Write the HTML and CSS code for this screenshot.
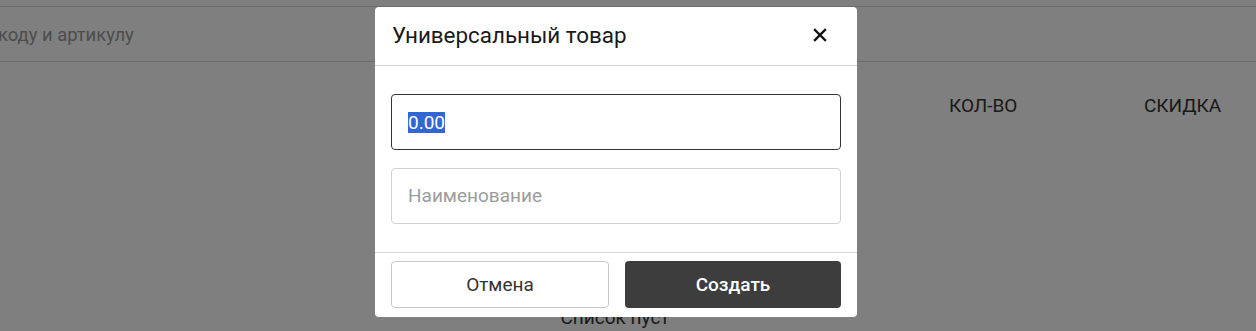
FILE: index.html
```html
<!DOCTYPE html>
<html lang="ru">
<head>
<meta charset="utf-8">
<link rel="stylesheet" href="styles.css">
</head>
<body>
<div class="page">
  <div class="topbar"></div>
  <div class="search"><span class="search-text">коду и артикулу</span></div>
  <div class="table-head">
    <span class="col col-qty">КОЛ-ВО</span>
    <span class="col col-disc">СКИДКА</span>
  </div>
  <div class="empty-wrap"><span class="empty">Список пуст</span></div>
</div>
<div class="overlay">
  <div class="modal">
    <div class="modal-header">
      <span class="modal-title">Универсальный товар</span>
      <svg class="close" width="14" height="14" viewBox="0 0 14 14"><path d="M2 2L12 12M12 2L2 12" stroke="#111" stroke-width="2.4" stroke-linecap="square"/></svg>
    </div>
    <div class="modal-body">
      <div class="field field-active"><span class="sel">0.00</span></div>
      <div class="field"><span class="placeholder">Наименование</span></div>
    </div>
    <div class="modal-footer">
      <div class="btn btn-cancel">Отмена</div>
      <div class="btn btn-create">Создать</div>
    </div>
  </div>
</div>
</body>
</html>
```

FILE: styles.css
```css
* { box-sizing: border-box; }
html, body { margin: 0; padding: 0; }
body {
  width: 1256px;
  height: 331px;
  overflow: hidden;
  background: #fff;
  font-family: Roboto, "Noto Sans", sans-serif;
  position: relative;
}
.page { width: 1256px; }
.topbar {
  height: 7px;
  border-bottom: 1px solid #d8d8d8;
}
.search {
  height: 55px;
  border-bottom: 1px solid #d8d8d8;
  display: flex;
  align-items: center;
}
.search-text {
  font-size: 18.4px;
  color: #9a9a9a;
  margin-left: -2px;
}
.table-head {
  height: 90px;
  position: relative;
}
.col {
  font-size: 19px;
  color: #333;
  position: absolute;
  top: 32px;
}
.col-qty { left: 949px; }
.col-disc { left: 1144px; }
.empty-wrap {
  display: flex;
  justify-content: center;
  padding-top: 154px;
  padding-right: 26px;
}
.empty {
  font-size: 19px;
  color: #333;
}
.overlay {
  position: absolute;
  inset: 0;
  background: rgba(0, 0, 0, 0.5);
}
.modal {
  margin-left: 375px;
  margin-top: 7px;
  width: 482px;
  background: #fff;
  border-radius: 4px;
  display: flex;
  flex-direction: column;
}
.modal-header {
  height: 59px;
  border-bottom: 1px solid #d6d6d6;
  display: flex;
  align-items: center;
  justify-content: space-between;
  padding: 0 30px 0 17px;
}
.modal-title {
  font-size: 22.4px;
  color: #1a1a1a;
  padding-bottom: 2px;
}
.close { display: block; margin-top: -2px; }
.modal-body {
  padding: 28px 16px 28px;
  display: flex;
  flex-direction: column;
  gap: 18px;
  border-bottom: 1px solid #d6d6d6;
}
.field {
  height: 56px;
  border: 1px solid #d2d2d2;
  border-radius: 4px;
  display: flex;
  align-items: center;
  padding-left: 16px;
  font-size: 19px;
}
.field-active { border-color: #333; }
.sel {
  background: #3166d4;
  color: #fff;
  line-height: 21px;
}
.placeholder { color: #9c9c9c; padding-bottom: 2px; }
.modal-footer {
  display: flex;
  gap: 16px;
  padding: 8px 16px 9px;
}
.btn {
  flex: 1;
  height: 47px;
  border-radius: 4px;
  display: flex;
  align-items: center;
  justify-content: center;
  font-size: 19px;
}
.btn-cancel {
  border: 1px solid #c8c8c8;
  color: #333;
}
.btn-create {
  background: #3d3d3d;
  color: #fff;
  font-weight: 500;
}
```
